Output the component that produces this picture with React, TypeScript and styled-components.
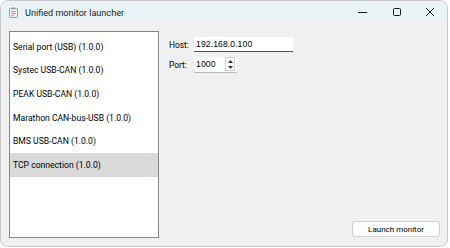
import { useState } from "react";
import styled, { createGlobalStyle } from "styled-components";

const GlobalStyle = createGlobalStyle`
  html, body {
    margin: 0;
    padding: 0;
    background: #ffffff;
  }
  body {
    font-family: Roboto, "Noto Sans", sans-serif;
  }
`;

const drivers = [
  "Serial port (USB) (1.0.0)",
  "Systec USB-CAN (1.0.0)",
  "PEAK USB-CAN (1.0.0)",
  "Marathon CAN-bus-USB (1.0.0)",
  "BMS USB-CAN (1.0.0)",
  "TCP connection (1.0.0)",
];

const App = () => {
  const [selected, setSelected] = useState(5);

  return (
    <>
      <GlobalStyle />
      <Window>
        <TitleBar>
          <AppIcon viewBox="0 0 10 12">
            <rect x="0.5" y="1.5" width="9" height="10" rx="1" fill="#f4f4f4" stroke="#8a8a8a" />
            <rect x="3" y="0.5" width="4" height="2" rx="0.5" fill="#9a9a9a" />
            <line x1="2.5" y1="5" x2="7.5" y2="5" stroke="#e0708a" />
            <line x1="2.5" y1="7" x2="7.5" y2="7" stroke="#e0708a" />
            <line x1="2.5" y1="9" x2="6" y2="9" stroke="#e0708a" />
          </AppIcon>
          <Title>Unified monitor launcher</Title>
          <Caption>
            <CaptionButton>
              <svg width="10" height="10" viewBox="0 0 10 10">
                <line x1="0" y1="5.5" x2="9" y2="5.5" stroke="#1b1b1b" strokeWidth="1" />
              </svg>
            </CaptionButton>
            <CaptionButton>
              <svg width="10" height="10" viewBox="0 0 10 10">
                <rect x="1.5" y="1.5" width="7" height="7" rx="1" fill="none" stroke="#1b1b1b" strokeWidth="1" />
              </svg>
            </CaptionButton>
            <CaptionButton>
              <svg width="10" height="10" viewBox="0 0 10 10">
                <path d="M1 1 L9 9 M9 1 L1 9" stroke="#1b1b1b" strokeWidth="1" />
              </svg>
            </CaptionButton>
          </Caption>
        </TitleBar>

        <Body>
          <ListBox>
            {drivers.map((d, i) => (
              <ListItem key={d} $selected={i === selected} onClick={() => setSelected(i)}>
                {d}
              </ListItem>
            ))}
          </ListBox>

          <Panel>
            <Form>
              <FieldRow>
                <Label>Host:</Label>
                <HostInput defaultValue="192.168.0.100" />
              </FieldRow>
              <FieldRow>
                <Label>Port:</Label>
                <SpinBox>
                  <SpinText>1000</SpinText>
                  <SpinArrows>
                    <SpinArrow>
                      <svg width="5" height="3" viewBox="0 0 5 3">
                        <path d="M0 3 L2.5 0 L5 3 Z" fill="#333" />
                      </svg>
                    </SpinArrow>
                    <SpinArrow>
                      <svg width="5" height="3" viewBox="0 0 5 3">
                        <path d="M0 0 L2.5 3 L5 0 Z" fill="#333" />
                      </svg>
                    </SpinArrow>
                  </SpinArrows>
                </SpinBox>
              </FieldRow>
            </Form>
            <Footer>
              <PushButton>Launch monitor</PushButton>
            </Footer>
          </Panel>
        </Body>
      </Window>
    </>
  );
};

const Window = styled.div`
  width: 448px;
  height: 247px;
  box-sizing: border-box;
  border: 1px solid #c9c9c9;
  border-radius: 8px;
  overflow: hidden;
  display: flex;
  flex-direction: column;
  background: #f0f0f0;
  color: #000;
`;

const TitleBar = styled.div`
  height: 21px;
  flex-shrink: 0;
  display: flex;
  align-items: center;
  background: #eaf4f7;
  padding-left: 8px;
`;

const AppIcon = styled.svg`
  width: 9px;
  height: 11px;
  margin-right: 7px;
  margin-top: 2px;
`;

const Title = styled.span`
  font-size: 9.1px;
  color: #1a1a1a;
  flex: 1;
  padding-top: 2px;
`;

const Caption = styled.div`
  display: flex;
  height: 100%;
`;

const CaptionButton = styled.div`
  width: 33.5px;
  height: 100%;
  display: flex;
  align-items: center;
  justify-content: center;
  padding-top: 1px;
  box-sizing: border-box;
`;

const Body = styled.div`
  flex: 1;
  display: flex;
  padding: 9px 7px 8px 8px;
  gap: 10px;
`;

const ListBox = styled.div`
  width: 150px;
  box-sizing: border-box;
  border: 1px solid #828790;
  background: #ffffff;
  padding-top: 3px;
  display: flex;
  flex-direction: column;
`;

const ListItem = styled.div<{ $selected: boolean }>`
  height: 23.6px;
  display: flex;
  align-items: center;
  padding-left: 3px;
  font-size: 8.6px;
  white-space: nowrap;
  background: ${(p) => (p.$selected ? "#d9d9d9" : "transparent")};
  cursor: default;
`;

const Panel = styled.div`
  flex: 1;
  display: flex;
  flex-direction: column;
  justify-content: space-between;
`;

const Form = styled.div`
  display: flex;
  flex-direction: column;
  gap: 5px;
  padding-top: 6px;
`;

const FieldRow = styled.div`
  display: flex;
  align-items: center;
  height: 15px;
`;

const Label = styled.span`
  width: 25px;
  font-size: 8.4px;
`;

const HostInput = styled.input`
  width: 99px;
  height: 15px;
  box-sizing: border-box;
  border: none;
  border-bottom: 1.5px solid #0067c0;
  background: #ffffff;
  padding: 0 2px;
  font-family: "Liberation Sans", sans-serif;
  font-size: 8.6px;
  letter-spacing: 0.1px;
  color: #000;
  outline: none;
`;

const SpinBox = styled.div`
  width: 43px;
  height: 16px;
  box-sizing: border-box;
  display: flex;
  align-items: center;
  background: #ffffff;
  border-bottom: 1px solid #b9b9b9;
`;

const SpinText = styled.span`
  flex: 1;
  padding-left: 2px;
  font-family: "Liberation Sans", sans-serif;
  font-size: 8.6px;
  letter-spacing: 0.1px;
`;

const SpinArrows = styled.div`
  width: 10px;
  height: 14px;
  margin-right: 2px;
  display: flex;
  flex-direction: column;
  border: 1px solid #d0d0d0;
  box-sizing: border-box;
`;

const SpinArrow = styled.div`
  flex: 1;
  display: flex;
  align-items: center;
  justify-content: center;
`;

const Footer = styled.div`
  display: flex;
  justify-content: flex-end;
`;

const PushButton = styled.button`
  width: 88px;
  height: 16px;
  box-sizing: border-box;
  border: 1px solid #d0d0d0;
  border-radius: 3px;
  background: #fdfdfd;
  font-family: Roboto, sans-serif;
  font-size: 8px;
  color: #000;
  padding: 0;
  margin-bottom: 1px;
`;

export default App;
